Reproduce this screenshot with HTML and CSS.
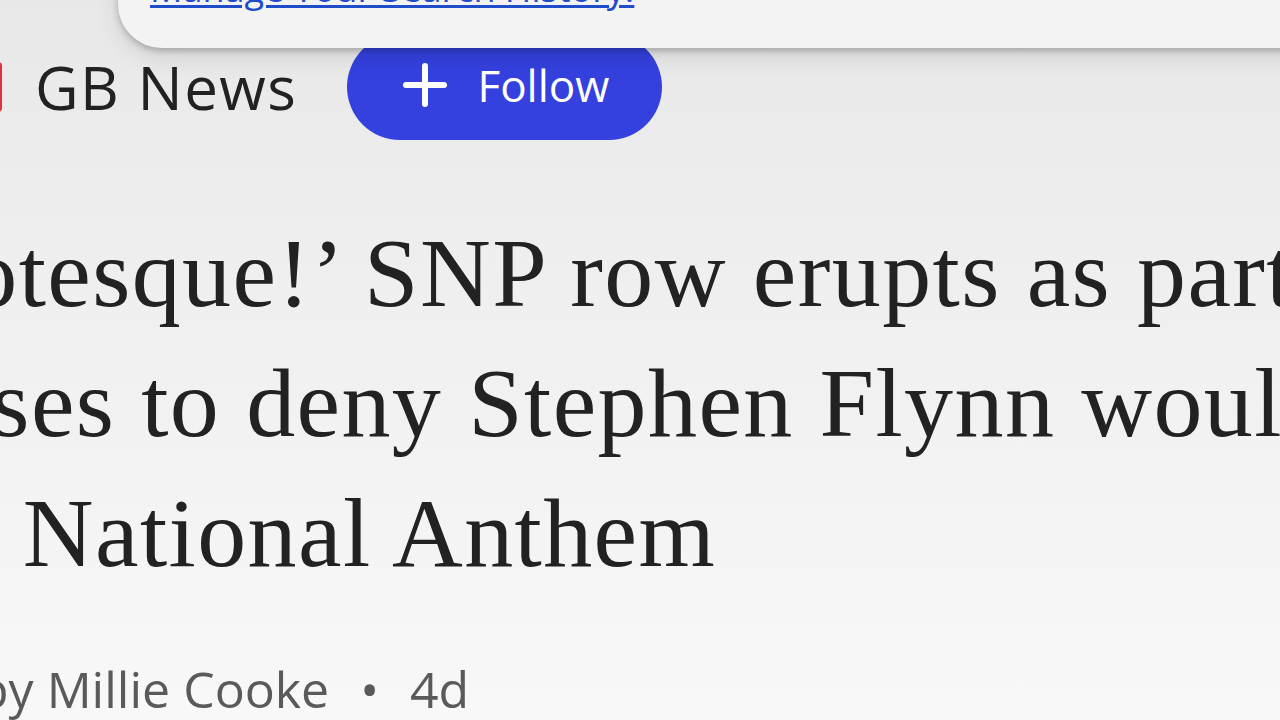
FILE: index.html
```html
<!DOCTYPE html>
<html lang="en">
<head>
<meta charset="utf-8">
<title>GB News</title>
<link rel="stylesheet" href="styles.css">
</head>
<body>
<div class="popup">
  <a class="history-link" href="#">Manage Your Search History.</a>
</div>
<main class="page">
  <header class="source-row">
    <div class="logo"></div>
    <span class="source-name">GB News</span>
    <button class="follow-btn">
      <svg class="plus" viewBox="0 0 44 44" width="44" height="44"><path d="M22 3v38M3 22h38" stroke="#fff" stroke-width="6" stroke-linecap="round" fill="none"/></svg>
      <span>Follow</span>
    </button>
  </header>
  <h1 class="headline">&lsquo;Grotesque!&rsquo; SNP row erupts as party<br>refuses to deny Stephen Flynn would<br>sing National Anthem</h1>
  <p class="byline">by Millie Cooke <span class="dot">&bull;</span> 4d</p>
</main>
</body>
</html>
```
FILE: styles.css
```css
html, body {
  margin: 0;
  padding: 0;
  width: 1280px;
  height: 720px;
  overflow: hidden;
}
body {
  background: linear-gradient(180deg, #e8e8e8 0%, #efefef 40%, #f8f8f8 100%);
  font-family: "Open Sans", "Noto Sans", sans-serif;
  position: relative;
}
.popup {
  position: absolute;
  left: 118px;
  right: -60px;
  top: -80px;
  height: 128px;
  background: #f3f3f3;
  border-radius: 0 0 0 44px;
  box-shadow: 0 3px 6px rgba(0,0,0,0.22), 0 10px 24px rgba(0,0,0,0.10);
  z-index: 2;
}
.history-link {
  position: absolute;
  left: 32px;
  top: 44px;
  font-size: 36px;
  line-height: 50px;
  font-weight: 500;
  color: #1f4cc8;
  text-decoration: underline;
  text-decoration-thickness: 3px;
  text-underline-offset: 3px;
  white-space: nowrap;
}
.page {
  display: flex;
  flex-direction: column;
  padding-top: 34px;
}
.source-row {
  display: flex;
  align-items: center;
  margin-left: -50px;
  height: 106px;
}
.logo {
  width: 52px;
  height: 50px;
  background: #e0313f;
  border-radius: 4px;
  margin-right: 33px;
}
.source-name {
  font-size: 60px;
  color: #222;
  font-weight: 400;
  margin-right: 50px;
  letter-spacing: 1.5px;
}
.follow-btn {
  display: flex;
  align-items: center;
  gap: 30px;
  height: 106px;
  width: 315px;
  padding: 0 0 4px 56px;
  border: none;
  border-radius: 53px;
  background: #3441de;
  color: #fff;
  font-family: "Open Sans", "Noto Sans", sans-serif;
  font-size: 44px;
  box-sizing: border-box;
}
.plus {
  flex: none;
}
.headline {
  margin: 68px 0 0 -172px;
  font-family: "Liberation Serif", serif;
  font-weight: 400;
  font-size: 98px;
  line-height: 130px;
  color: #222;
  white-space: nowrap;
  letter-spacing: 1.4px;
}
.byline {
  margin: 57px 0 0 -22px;
  font-size: 50px;
  color: #5a5a5a;
  white-space: nowrap;
}
.dot {
  margin: 0 18px;
}
```
